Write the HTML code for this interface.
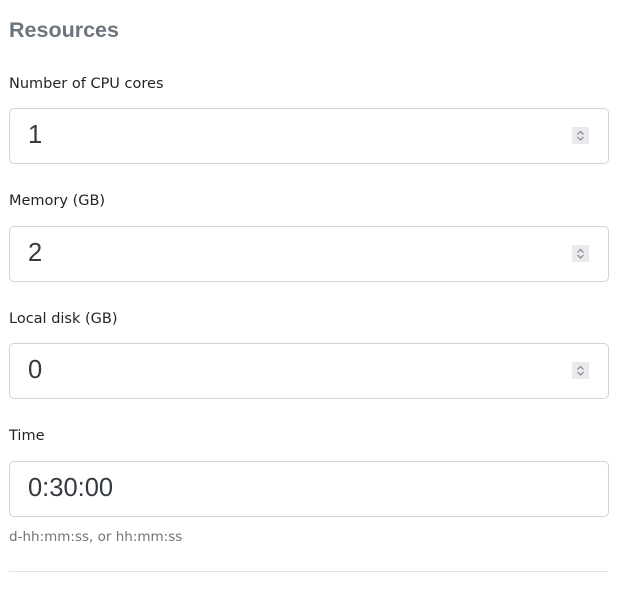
<html><head><style>
body{margin:0;background:#fff;font-family:"DejaVu Sans","Liberation Sans",sans-serif;}
.t{position:absolute;left:9px;top:18px;font-size:21.5px;font-weight:bold;color:#6c757d;font-family:"Liberation Sans",sans-serif;}
.l{position:absolute;left:9px;font-size:14.5px;color:#212529;}
.i{position:absolute;left:9px;width:600px;height:56px;border:1px solid #ced4da;border-radius:5px;box-sizing:border-box;}
.i span{position:absolute;left:18px;top:12px;font-size:25.5px;color:#343a40;font-family:"Liberation Sans",sans-serif;}
.s{position:absolute;left:562px;top:18px;width:17px;height:17px;background:#e9e9ee;}
.s svg{display:block}
.h{position:absolute;left:9px;top:529px;font-size:13.5px;color:#6c757d;}
.d{position:absolute;left:9px;top:571px;width:599px;height:1px;background:#dee2e6;}
</style></head><body>
<div class="t">Resources</div>
<div class="l" style="top:76px">Number of CPU cores</div>
<div class="i" style="top:108px"><span>1</span><div class="s"><svg width="17" height="17"><path d="M5.5 7.5L8.5 4.5L11.5 7.5M5.5 10L8.5 13L11.5 10" stroke="#888" fill="none" stroke-width="1.2"/></svg></div></div>
<div class="l" style="top:193px">Memory (GB)</div>
<div class="i" style="top:226px"><span>2</span><div class="s"><svg width="17" height="17"><path d="M5.5 7.5L8.5 4.5L11.5 7.5M5.5 10L8.5 13L11.5 10" stroke="#888" fill="none" stroke-width="1.2"/></svg></div></div>
<div class="l" style="top:311px">Local disk (GB)</div>
<div class="i" style="top:343px"><span>0</span><div class="s"><svg width="17" height="17"><path d="M5.5 7.5L8.5 4.5L11.5 7.5M5.5 10L8.5 13L11.5 10" stroke="#888" fill="none" stroke-width="1.2"/></svg></div></div>
<div class="l" style="top:428px">Time</div>
<div class="i" style="top:461px"><span>0:30:00</span></div>
<div class="h">d-hh:mm:ss, or hh:mm:ss</div>
<div class="d"></div>
</body></html>
